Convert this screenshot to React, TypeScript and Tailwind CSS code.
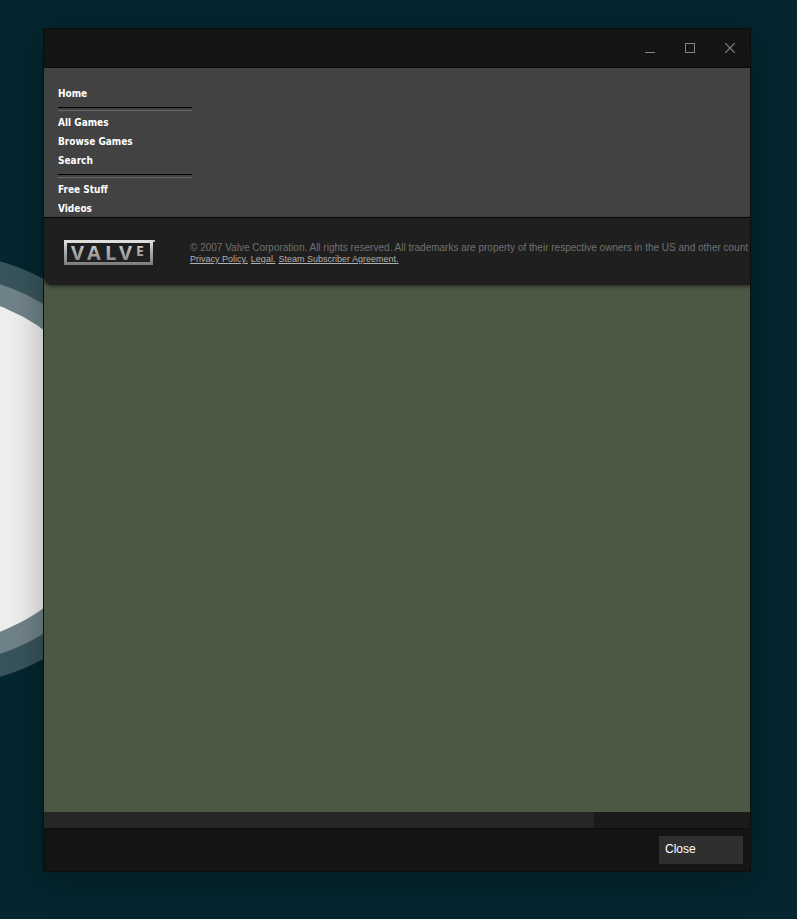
import React from "react";

const navGroups = [
	["Home"],
	["All Games", "Browse Games", "Search"],
	["Free Stuff", "Videos"],
];

const legalLinks = ["Privacy Policy.", "Legal.", "Steam Subscriber Agreement."];

function Wallpaper() {
	return (
		<svg className="absolute left-0 top-[240px]" width="200" height="460" viewBox="0 0 200 460" aria-hidden="true">
			<circle cx="-59" cy="229" r="216" fill="#38535b"/>
			<circle cx="-59" cy="229" r="194" fill="#6f8288"/>
			<circle cx="-59" cy="229" r="173" fill="#eeeeee"/>
		</svg>
	);
}

function ValveLogo() {
	return (
		<svg width="92" height="26" viewBox="0 0 92 26" role="img" aria-label="Valve">
			<defs>
				<linearGradient id="metal" x1="0" y1="0" x2="0" y2="26" gradientUnits="userSpaceOnUse">
					<stop offset="0" stopColor="#e8e8e8"/>
					<stop offset="0.4" stopColor="#b2b2b2"/>
					<stop offset="1" stopColor="#777777"/>
				</linearGradient>
			</defs>
			<rect x="1.5" y="1.5" width="86" height="22" fill="none" stroke="url(#metal)" strokeWidth="3"/>
			<rect x="0" y="0" width="89" height="2" fill="#dddddd"/>
			<rect x="89" y="0" width="2" height="2" fill="#bbbbbb"/>
			<g fill="url(#metal)" fontFamily="'Open Sans', sans-serif" fontWeight="700">
				<text x="7" y="20" fontSize="20">V</text>
				<text x="23" y="20" fontSize="20">A</text>
				<text x="41" y="20" fontSize="20">L</text>
				<text x="55" y="20" fontSize="20">V</text>
				<text x="72" y="16" fontSize="14">E</text>
			</g>
		</svg>
	);
}

function TitleBar() {
	const button = "flex h-full w-10 items-center justify-center";

	return (
		<div className="flex h-[39px] shrink-0 justify-end border-b border-[#0b0b0b] bg-[#141414] text-[#858585]">
			<button className={button} aria-label="Minimize">
				<svg width="10" height="10" viewBox="0 0 10 10" shapeRendering="crispEdges">
					<path d="M0 9.5H10" stroke="currentColor"/>
				</svg>
			</button>
			<button className={button} aria-label="Maximize">
				<svg width="10" height="10" viewBox="0 0 10 10" shapeRendering="crispEdges">
					<rect x="0.5" y="0.5" width="9" height="9" fill="none" stroke="currentColor"/>
				</svg>
			</button>
			<button className={button} aria-label="Close window">
				<svg width="10" height="10" viewBox="0 0 10 10">
					<path d="M0 0L10 10M10 0L0 10" stroke="currentColor" strokeWidth="1.2"/>
				</svg>
			</button>
		</div>
	);
}

function StoreNav() {
	return (
		<nav className="h-[150px] shrink-0 overflow-hidden border-b border-black bg-[#424242] px-3.5 pt-4">
			{navGroups.map((group, index) => (
				<div key={group[0]} className="w-[134px]">
					{index > 0 && <div className="mt-1 mb-0.5 h-1 border-t border-b border-t-black border-b-[#666666]"/>}
					{group.map((item) => (
						<a key={item} href="#" className="block h-[19px] font-['DejaVu_Sans_Condensed','DejaVu_Sans',sans-serif] text-[10px] leading-[19px] font-bold text-white">
							{item}
						</a>
					))}
				</div>
			))}
		</nav>
	);
}

function StoreFooter() {
	return (
		<footer className="flex h-[67px] shrink-0 gap-[34px] overflow-hidden rounded-bl-lg bg-[#1f1f1f] pl-5 shadow-[0_1px_4px_#1f1f1f]">
			<div className="shrink-0 pt-[22px]">
				<ValveLogo/>
			</div>
			<div className="pt-6 whitespace-nowrap">
				<p className="text-[10px] leading-3 text-[#707070]">
					© 2007 Valve Corporation. All rights reserved. All trademarks are property of their respective owners in the US and other count
				</p>
				<p className="flex gap-[3px] text-[9px] leading-[10px] text-[#b0b0b0]">
					{legalLinks.map((link) => (
						<a key={link} href="#" className="underline">{link}</a>
					))}
				</p>
			</div>
		</footer>
	);
}

function App() {
	return (
		<div className="relative flex min-h-screen overflow-hidden bg-[#04262f] pt-7 pr-[46px] pb-[47px] pl-[43px] font-['Liberation_Sans',Arial,sans-serif]">
			<Wallpaper/>
			<div className="relative flex min-w-0 flex-1 flex-col border border-[#0d0d0d] bg-[#141414] shadow-[0_8px_32px_rgba(0,0,0,0.3)]">
				<TitleBar/>
				<main className="flex flex-1 flex-col overflow-hidden bg-[#4c5844]">
					<StoreNav/>
					<StoreFooter/>
				</main>
				<div className="h-4 shrink-0 bg-[#1a1a1a]">
					<div className="h-full w-[77.9%] bg-[#262626]"/>
				</div>
				<div className="flex h-[43px] shrink-0 justify-end border-t border-[#0d0d0d] px-[7px] pt-[7px]">
					<button className="h-7 w-[84px] bg-[#2f2f2f] px-1.5 pb-0.5 text-left text-xs text-white">Close</button>
				</div>
			</div>
		</div>
	);
}

export default App;
